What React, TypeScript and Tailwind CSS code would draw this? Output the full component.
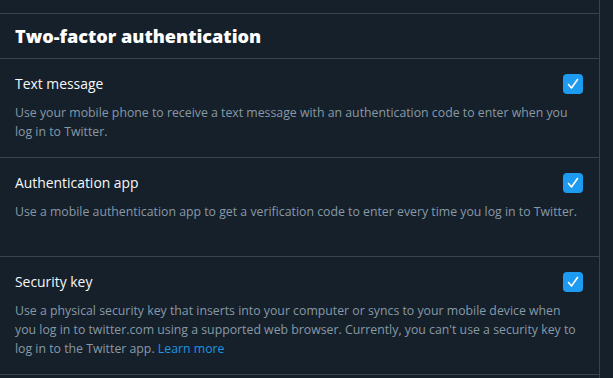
import React from "react";

function Check() {
  return (
    <div className="w-[20px] h-[20px] rounded-[4px] bg-[#1d9bf0] flex items-center justify-center shrink-0">
      <svg width="14" height="14" viewBox="0 0 14 14" fill="none">
        <path d="M2.5 7.5 L5.5 11 L11.5 2.5" stroke="white" strokeWidth="1.6" strokeLinecap="round" strokeLinejoin="round" />
      </svg>
    </div>
  );
}

function Row({ title, children }: { title: string; children: React.ReactNode }) {
  return (
    <div className="border-b border-[#38444d] px-[15px] pt-[15px] pb-[16px]">
      <div className="flex items-center justify-between h-[20px]">
        <span className="text-[13.9px] text-[#f5f8fa] leading-[20px]">{title}</span>
        <div className="mr-[1px]"><Check /></div>
      </div>
      <p className="mt-[9px] min-h-[38px] text-[12.3px] leading-[19px] text-[#8899a6]">{children}</p>
    </div>
  );
}

export default function App() {
  return (
    <div className="w-[613px] h-[378px] overflow-hidden bg-[#15202b] font-['Open_Sans',sans-serif]">
      <div className="w-[600px] border-r border-[#38444d] h-full">
        <div className="h-[14px] border-b border-[#38444d]" />
        <div className="h-[45px] border-b border-[#38444d] px-[15px] flex items-center">
          <h2 className="text-[18.1px] font-extrabold text-white leading-[24px]">Two-factor authentication</h2>
        </div>
        <Row title="Text message">
          Use your mobile phone to receive a text message with an authentication code to enter when you log in to Twitter.
        </Row>
        <Row title="Authentication app">
          Use a mobile authentication app to get a verification code to enter every time you log in to Twitter.
        </Row>
        <Row title="Security key">
          Use a physical security key that inserts into your computer or syncs to your mobile device when you log in to twitter.com using a supported web browser. Currently, you can't use a security key to log in to the Twitter app.{" "}
          <span className="text-[#1b95e0]">Learn more</span>
        </Row>
      </div>
    </div>
  );
}
